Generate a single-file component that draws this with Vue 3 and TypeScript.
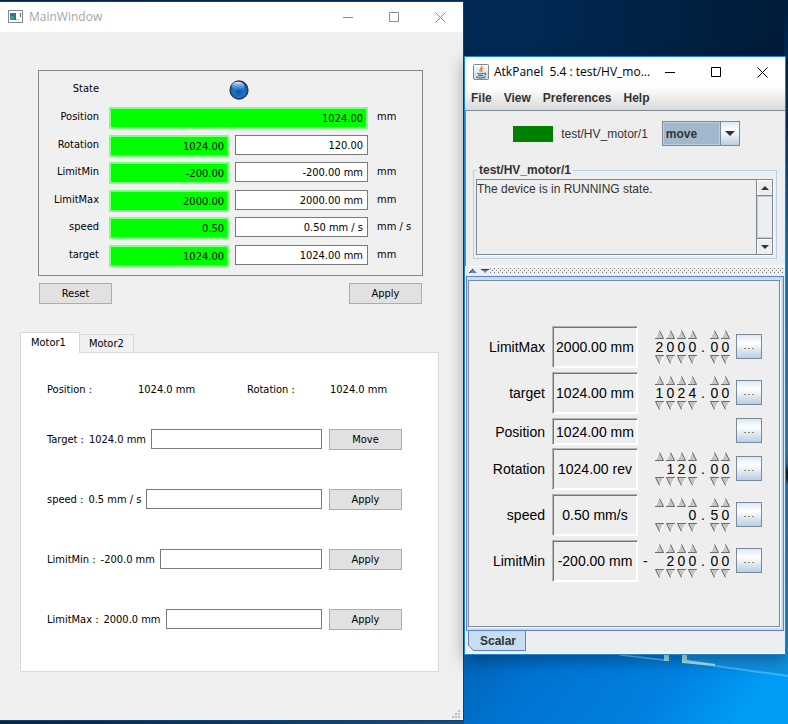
<script setup lang="ts">
import { ref } from 'vue'

interface FieldRow {
  id: string
  label: string
  read: string
  write?: string
  unit?: string
}

interface MotorRow {
  id: string
  label: string
  value: string
  action: string
}

interface ScalarRow {
  label: string
  value: string
  sign: string
  whole: string[]
  decimals: string[]
}

const fields = ref<FieldRow[]>([
  { id: 'position', label: 'Position', read: '1024.00', unit: 'mm' },
  { id: 'rotation', label: 'Rotation', read: '1024.00', write: '120.00' },
  { id: 'limit-min', label: 'LimitMin', read: '-200.00', write: '-200.00 mm', unit: 'mm' },
  { id: 'limit-max', label: 'LimitMax', read: '2000.00', write: '2000.00 mm', unit: 'mm' },
  { id: 'speed', label: 'speed', read: '0.50', write: '0.50 mm / s', unit: 'mm / s' },
  { id: 'target', label: 'target', read: '1024.00', write: '1024.00 mm', unit: 'mm' },
])

const motorRows: MotorRow[] = [
  { id: 'm-target', label: 'Target :', value: '1024.0 mm', action: 'Move' },
  { id: 'm-speed', label: 'speed :', value: '0.5 mm / s', action: 'Apply' },
  { id: 'm-min', label: 'LimitMin :', value: '-200.0 mm', action: 'Apply' },
  { id: 'm-max', label: 'LimitMax :', value: '2000.0 mm', action: 'Apply' },
]

const scalars: ScalarRow[] = [
  { label: 'LimitMax', value: '2000.00 mm', sign: '', whole: ['2', '0', '0', '0'], decimals: ['0', '0'] },
  { label: 'target', value: '1024.00 mm', sign: '', whole: ['1', '0', '2', '4'], decimals: ['0', '0'] },
  { label: 'Position', value: '1024.00 mm', sign: '', whole: [], decimals: [] },
  { label: 'Rotation', value: '1024.00 rev', sign: '', whole: ['', '1', '2', '0'], decimals: ['0', '0'] },
  { label: 'speed', value: '0.50 mm/s', sign: '', whole: ['', '', '', '0'], decimals: ['5', '0'] },
  { label: 'LimitMin', value: '-200.00 mm', sign: '-', whole: ['', '2', '0', '0'], decimals: ['0', '0'] },
]

const menus = ['File', 'View', 'Preferences', 'Help']
const activeTab = ref('Motor1')
const status = 'The device is in RUNNING state.'
</script>

<template>
  <div class="desktop">
    <svg class="wallpaper" viewBox="0 0 788 724" preserveAspectRatio="none" aria-hidden="true">
      <defs>
        <linearGradient id="sky" x1="0" y1="0" x2="1" y2="0">
          <stop offset="0" stop-color="#00234a" />
          <stop offset="0.65" stop-color="#002a55" />
          <stop offset="1" stop-color="#001b38" />
        </linearGradient>
        <linearGradient id="edge" x1="0" y1="0" x2="0" y2="1">
          <stop offset="0" stop-color="#001b38" />
          <stop offset="0.18" stop-color="#003a78" />
          <stop offset="0.36" stop-color="#0a86dc" />
          <stop offset="0.62" stop-color="#1c8fd0" />
          <stop offset="0.64" stop-color="#1b7fc4" />
          <stop offset="0.65" stop-color="#002a5c" />
          <stop offset="0.66" stop-color="#002a5c" />
          <stop offset="0.67" stop-color="#1686cf" />
          <stop offset="1" stop-color="#0a96ee" />
        </linearGradient>
        <linearGradient id="floor" x1="0" y1="0" x2="1" y2="0.2">
          <stop offset="0" stop-color="#0062b4" />
          <stop offset="0.3" stop-color="#0074d2" />
          <stop offset="0.7" stop-color="#0080e0" />
          <stop offset="1" stop-color="#009cf6" />
        </linearGradient>
        <linearGradient id="strip" x1="0" y1="0" x2="1" y2="0">
          <stop offset="0" stop-color="#00264f" />
          <stop offset="0.6" stop-color="#003f78" />
          <stop offset="1" stop-color="#00559c" />
        </linearGradient>
      </defs>
      <rect width="788" height="724" fill="url(#sky)" />
      <rect x="784" width="4" height="724" fill="url(#edge)" />
      <rect x="463" y="640" width="325" height="84" fill="url(#floor)" />
      <rect y="718" width="464" height="6" fill="url(#strip)" />
      <path d="M620 655L664 660" stroke="#5cc0ea" stroke-width="1.5" />
      <path d="M664 652H669V661L664 661Z" fill="#a9e6ee" />
      <path d="M683 652L788 652L788 674L683 661Z" fill="#0f92e2" />
      <path d="M688 662L788 676" stroke="#3db4f0" stroke-width="2" />
      <path d="M682 652H687V660L715 664V666L682 663Z" fill="#a9e6ee" />
    </svg>

    <main class="window main-window">
      <header class="titlebar inactive">
        <svg class="app-icon" viewBox="0 0 16 14" aria-hidden="true">
          <rect x="0.5" y="0.5" width="14" height="12" fill="#fff" stroke="#84878f" />
          <rect x="0" y="12" width="15" height="1" fill="#84878f" />
          <rect x="2" y="3" width="6" height="7" fill="#2f6f9a" />
          <rect x="2" y="6" width="4" height="4" fill="#3f9a78" />
          <rect x="8" y="9" width="3" height="1" fill="#c6c9ce" />
          <rect x="12" y="3" width="1" height="4" fill="#3e6e9e" />
        </svg>
        <h1 class="title">MainWindow</h1>
        <div class="controls">
          <button type="button" aria-label="Minimize"><svg viewBox="0 0 11 11"><path d="M0 5.5H10" /></svg></button>
          <button type="button" aria-label="Maximize"><svg viewBox="0 0 11 11"><path d="M0.5 0.5H9.5V9.5H0.5Z" /></svg></button>
          <button type="button" aria-label="Close"><svg viewBox="0 0 11 11"><path d="M0.5 0.5L10.5 10.5M10.5 0.5L0.5 10.5" /></svg></button>
        </div>
      </header>

      <div class="main-body">
        <section class="device">
          <div class="frame">
            <span class="name">State</span>
            <span class="led-cell">
              <svg class="led" viewBox="0 0 20 20" aria-hidden="true">
                <defs>
                  <radialGradient id="led-fill" cx="0.5" cy="0.6" r="0.55">
                    <stop offset="0" stop-color="#0f52a4" />
                    <stop offset="0.55" stop-color="#1c74cd" />
                    <stop offset="1" stop-color="#1a4c8a" />
                  </radialGradient>
                  <linearGradient id="led-shine" x1="0" y1="0" x2="0" y2="1">
                    <stop offset="0" stop-color="#e4f3ff" />
                    <stop offset="1" stop-color="#3c9cf0" stop-opacity="0.1" />
                  </linearGradient>
                </defs>
                <circle cx="10" cy="10" r="9" fill="url(#led-fill)" stroke="#28364a" stroke-width="1.3" />
                <ellipse cx="9" cy="6.2" rx="6.4" ry="4.4" fill="url(#led-shine)" />
              </svg>
            </span>
            <span></span>
            <template v-for="f in fields" :key="f.id">
              <label class="name" :for="f.id">{{ f.label }}</label>
              <input :id="f.id" class="read" :class="{ wide: !f.write }" :value="f.read" readonly />
              <input v-if="f.write" v-model="f.write" class="write" :aria-label="f.label + ' set value'" />
              <span class="unit">{{ f.unit }}</span>
            </template>
          </div>
          <div class="actions">
            <button type="button" class="push">Reset</button>
            <button type="button" class="push">Apply</button>
          </div>
        </section>

        <section class="motors">
          <div class="tabs" role="tablist">
            <button
              v-for="t in ['Motor1', 'Motor2']"
              :key="t"
              type="button"
              role="tab"
              class="tab"
              :class="{ active: t === activeTab }"
              :aria-selected="t === activeTab"
              @click="activeTab = t"
            >{{ t }}</button>
          </div>
          <div class="pane">
            <div class="summary">
              <span>Position :</span><span>1024.0 mm</span><span>Rotation :</span><span>1024.0 mm</span>
            </div>
            <div v-for="m in motorRows" :key="m.id" class="motor-row">
              <label :for="m.id"><span>{{ m.label }}</span><span>{{ m.value }}</span></label>
              <input :id="m.id" type="text" />
              <button type="button" class="push">{{ m.action }}</button>
            </div>
          </div>
        </section>
      </div>
      <svg class="grip" viewBox="0 0 8 8" aria-hidden="true">
        <path d="M6 0h2v2H6zM3 3h2v2H3zM6 3h2v2H6zM0 6h2v2H0zM3 6h2v2H3zM6 6h2v2H6z" fill="#bcbcbc" />
      </svg>
    </main>

    <aside class="window atk">
      <header class="titlebar">
        <svg class="java" viewBox="0 0 16 16" aria-hidden="true">
          <defs>
            <linearGradient id="java-bg" x1="0" y1="0" x2="0" y2="1">
              <stop offset="0" stop-color="#fdfdfd" />
              <stop offset="1" stop-color="#c3d3e2" />
            </linearGradient>
          </defs>
          <rect x="0.5" y="0.5" width="15" height="15" rx="1" fill="url(#java-bg)" stroke="#7d8791" />
          <path d="M8.6 1.6C10 3.6 5.6 4.6 7.4 7.8M10.6 4C8 5 8.2 6 9.2 8" fill="none" stroke="#e8803a" stroke-width="1.3" />
          <path d="M4.3 9.2C6 9.9 9 9.9 10.8 9.2M5 11.2C7 11.8 9 11.8 10.2 11.2M3.2 13.1C6 14.1 10.4 14 12.4 12.8M11.2 9.2C13.6 8.6 13.2 10.6 11.4 11" fill="none" stroke="#446a92" stroke-width="1.1" />
        </svg>
        <h2 class="title">AtkPanel&nbsp; 5.4&nbsp;: test/HV_mo...</h2>
        <div class="controls">
          <button type="button" aria-label="Minimize"><svg viewBox="0 0 11 11"><path d="M0 5.5H10" /></svg></button>
          <button type="button" aria-label="Maximize"><svg viewBox="0 0 11 11"><path d="M0.5 0.5H9.5V9.5H0.5Z" /></svg></button>
          <button type="button" aria-label="Close"><svg viewBox="0 0 11 11"><path d="M0.5 0.5L10.5 10.5M10.5 0.5L0.5 10.5" /></svg></button>
        </div>
      </header>
      <nav class="menubar">
        <button v-for="m in menus" :key="m" type="button">{{ m }}</button>
      </nav>

      <section class="upper">
        <div class="command">
          <span class="state-box"></span>
          <label for="command">test/HV_motor/1</label>
          <span class="combo">
            <select id="command"><option>move</option></select>
            <span class="combo-arrow"><svg viewBox="0 0 10 5"><path d="M0 0H10L5 5Z" fill="#333" /></svg></span>
          </span>
        </div>

        <fieldset class="status">
          <legend>test/HV_motor/1</legend>
          <div class="scroller">
            <textarea readonly aria-label="Device status" :value="status"></textarea>
            <div class="scrollbar">
              <button type="button" aria-label="Scroll up"><svg viewBox="0 0 8 4"><path d="M4 0L8 4H0Z" /></svg></button>
              <span class="thumb"></span>
              <button type="button" aria-label="Scroll down"><svg viewBox="0 0 8 4"><path d="M0 0H8L4 4Z" /></svg></button>
            </div>
          </div>
        </fieldset>
      </section>

      <div class="divider">
        <svg class="arrows" viewBox="0 0 20 4" aria-hidden="true">
          <path d="M4 0L8 4H0Z" fill="#6382bf" /><path d="M12 0H20L16 4Z" fill="#6382bf" />
          <path d="M4 0L0 4M12 0.5H20" stroke="#333" stroke-width="1" />
        </svg>
        <svg class="dots" aria-hidden="true">
          <defs>
            <pattern id="dot-grid" width="4" height="4" patternUnits="userSpaceOnUse">
              <rect width="1" height="1" fill="#7a7f86" /><rect x="2" y="2" width="1" height="1" fill="#7a7f86" />
            </pattern>
          </defs>
          <rect width="100%" height="100%" fill="url(#dot-grid)" />
        </svg>
      </div>

      <div class="scalar-pane">
        <div class="scalar-inner">
          <div v-for="s in scalars" :key="s.label" class="scalar" :class="{ compact: !s.whole.length }">
            <span class="s-name">{{ s.label }}</span>
            <output class="s-value">{{ s.value }}</output>
            <div class="wheel">
              <template v-if="s.whole.length">
                <span class="sign">{{ s.sign }}</span>
                <template v-for="part in ['whole', 'decimals'] as const" :key="part">
                  <span v-if="part === 'decimals'" class="dot">.</span>
                  <span v-for="(d, i) in s[part]" :key="part + i" class="digit">
                    <button type="button" aria-label="Increase">
                      <svg viewBox="0 0 9 9"><path d="M4.5 0L9 8.5H0Z" fill="#c6c6c6" /><path d="M4 0.5L0.5 8" stroke="#fff" /><path d="M4.5 0.5L8.5 8.5H0" fill="none" stroke="#6c6c6c" /></svg>
                    </button>
                    <span>{{ d }}</span>
                    <button type="button" aria-label="Decrease">
                      <svg viewBox="0 0 9 9"><path d="M0 0.5H9L4.5 9Z" fill="#c6c6c6" /><path d="M5 8.5L8.5 1" stroke="#fff" /><path d="M9 0.5H0.5L4.5 8.5" fill="none" stroke="#6c6c6c" /></svg>
                    </button>
                  </span>
                </template>
              </template>
            </div>
            <button type="button" class="more" :aria-label="s.label + ' options'">
              <svg viewBox="0 0 10 1"><path d="M0 0.5H2M4 0.5H6M8 0.5H10" stroke="#a5834f" /></svg>
            </button>
          </div>
        </div>
      </div>
      <div class="bottom-tabs" role="tablist">
        <button type="button" role="tab" aria-selected="true">
          <svg viewBox="0 0 6 6" aria-hidden="true"><path d="M0 0L6 6H0Z" fill="#eee" /><path d="M0 0L6 6" stroke="#6382bf" /></svg>
          Scalar
        </button>
      </div>
    </aside>
  </div>
</template>

<style>
body {
  margin: 0;
}
</style>

<style scoped>
* {
  box-sizing: border-box;
}

button,
input,
select,
textarea {
  margin: 0;
  padding: 0;
  border: 0;
  border-radius: 0;
  outline: 0;
  background: none;
  color: inherit;
  font: inherit;
}

svg {
  display: block;
}

.desktop {
  position: relative;
  display: grid;
  grid-template-columns: minmax(0, 464fr) minmax(0, 324fr);
  min-height: 100vh;
  overflow: hidden;
  background: #00234a;
}

.wallpaper {
  position: absolute;
  inset: 0;
  width: 100%;
  height: 100%;
}

.window {
  position: relative;
  display: flex;
  flex-direction: column;
}

.titlebar {
  display: flex;
  align-items: center;
  height: 30px;
  padding-left: 8px;
  background: #fff;
  color: #000;
  font-family: 'Open Sans', 'Noto Sans', sans-serif;
  font-size: 12px;
}

.titlebar.inactive {
  color: #a5a5a5;
}

.title {
  flex: 1;
  min-width: 0;
  margin: 0;
  font-size: 12px;
  font-weight: 400;
  line-height: 18px;
  white-space: nowrap;
}

.controls {
  display: flex;
}

.controls button {
  display: flex;
  align-items: center;
  justify-content: center;
  width: 46px;
  height: 28px;
}

.controls svg {
  width: 11px;
  height: 11px;
  fill: none;
  stroke: currentColor;
}

.inactive .controls {
  color: #8a8a8a;
}

/* Motor window */
.main-window {
  margin: 1px 0 3px;
  border: solid #1d3f63;
  border-width: 1px 1px 1px 0;
  background: #f0f0f0;
  color: #000;
  font-family: 'DejaVu Sans Condensed', 'DejaVu Sans', sans-serif;
  font-size: 11px;
  line-height: 20px;
}

.app-icon {
  width: 16px;
  height: 14px;
  margin-right: 5px;
}

.main-body {
  flex: 1;
  padding: 38px 24px 0 20px;
}

.device {
  padding: 0 16px 0 18px;
}

.frame {
  display: grid;
  grid-template-columns: 64px minmax(0, 120fr) minmax(0, 133fr) 48px;
  grid-template-rows: 28px 28px 27px 28px 27px 28px 30px;
  column-gap: 6px;
  align-items: start;
  padding-top: 8px;
  border: 1px solid #828790;
}

.name {
  padding-right: 4px;
  text-align: right;
}

.led-cell {
  grid-column: span 2;
  justify-self: center;
  padding-top: 1px;
}

.led {
  width: 20px;
  height: 20px;
}

.read {
  width: 100%;
  height: 22px;
  padding-right: 3px;
  border: 2px solid #80ff80;
  background: #0f0;
  text-align: right;
}

.read.wide {
  grid-column: span 2;
}

.write {
  width: 100%;
  height: 20px;
  padding: 1px 4px 0 0;
  border: 1px solid #7a7a7a;
  background: #fff;
  text-align: right;
}

.unit {
  padding-left: 3px;
  white-space: nowrap;
}

.actions {
  display: flex;
  justify-content: space-between;
  padding: 7px 1px 0;
}

.push {
  width: 73px;
  height: 21px;
  padding-top: 1px;
  border: 1px solid #adadad;
  background: #e1e1e1;
  line-height: 18px;
}

.motors {
  padding-top: 28px;
}

.tabs {
  display: flex;
  align-items: flex-end;
}

.tab {
  height: 18px;
  padding: 0 9px;
  border: 1px solid #d9d9d9;
  border-width: 1px 1px 0 0;
  background: #f0f0f0;
  line-height: 18px;
}

.tab.active {
  z-index: 1;
  height: 21px;
  margin-bottom: -1px;
  padding: 0 13px 0 10px;
  border-left-width: 1px;
  background: #fff;
}

.pane {
  display: flex;
  flex-direction: column;
  gap: 39px;
  padding: 27px 36px 41px 26px;
  border: 1px solid #d9d9d9;
  background: #fff;
}

.summary {
  display: grid;
  grid-template-columns: 91fr 109fr 83fr 72fr;
  margin-bottom: -11px;
}

.summary,
.motor-row {
  height: 21px;
  white-space: nowrap;
}

.motor-row {
  display: flex;
  align-items: center;
  gap: 5px;
}

.motor-row label {
  display: flex;
  gap: 5px;
}

.motor-row .push {
  margin-left: 2px;
}

.motor-row input {
  flex: 1;
  align-self: flex-start;
  min-width: 0;
  height: 20px;
  border: 1px solid #7a7a7a;
  background: #fff;
}

.grip {
  align-self: flex-end;
  width: 8px;
  height: 8px;
  margin: 0 3px 2px 0;
}

/* Device panel window */
.atk {
  align-self: start;
  margin: 56px 2px 0 0;
  border: 1px solid #1883d7;
  background: #eee;
  box-shadow: 0 5px 16px rgba(0, 0, 0, 0.35);
  color: #333;
  font-family: 'Liberation Sans', Arial, sans-serif;
  font-size: 12px;
  line-height: 16px;
}

.java {
  width: 16px;
  height: 16px;
  margin-right: 5px;
}

.menubar {
  display: flex;
  gap: 12px;
  height: 24px;
  padding-left: 6px;
  border-bottom: 1px solid #7a8a99;
  background: linear-gradient(#fff, #dadada);
}

.menubar button {
  height: 21px;
  font-weight: 700;
}

.upper {
  border-left: 1px solid #7a8a99;
}

.command {
  display: flex;
  align-items: center;
  justify-content: center;
  padding: 10px 0 0 2px;
}

.state-box {
  width: 40px;
  height: 16px;
  margin-right: 8px;
  background: #008000;
}

.command label {
  margin-right: 14px;
}

.combo {
  display: flex;
  width: 78px;
  height: 25px;
  border: 1px solid #7a8a99;
}

.combo select {
  flex: 1;
  min-width: 0;
  padding-left: 2px;
  border: 1px solid #b8cfe5;
  appearance: none;
  background: #a3b8cc;
  font-weight: 700;
}

.combo-arrow {
  display: flex;
  align-items: center;
  justify-content: center;
  width: 19px;
  border-left: 1px solid #7a8a99;
  background: linear-gradient(#dde8f3, #fff 35%, #b8cfe5);
}

.combo-arrow svg {
  width: 10px;
  height: 5px;
}

.status {
  min-width: 0;
  margin: 16px 8px 7px 7px;
  padding: 1px 3px 3px 2px;
  border: 1px solid #b8cfe5;
}

.status legend {
  margin-left: 1px;
  padding: 0 2px;
  font-weight: 700;
}

.scroller {
  display: flex;
  height: 76px;
  border: 1px solid #7a8a99;
  box-shadow: 1px 1px #fff;
}

.scroller textarea {
  flex: 1;
  min-width: 0;
  resize: none;
  overflow: hidden;
  line-height: 18px;
}

.scrollbar {
  display: flex;
  flex-direction: column;
  width: 16px;
  border-left: 1px solid #7a8a99;
}

.scrollbar button {
  display: flex;
  align-items: center;
  justify-content: center;
  height: 16px;
  border: solid #7a8a99;
  border-width: 0 0 1px;
  box-shadow: inset 1px 1px #fff;
}

.scrollbar button:last-child {
  border-width: 1px 0 0;
}

.scrollbar svg {
  width: 8px;
  height: 4px;
  fill: #333;
}

.thumb {
  flex: 1;
  border: 1px solid #b8cfe5;
  border-right: 0;
}

.divider {
  display: flex;
  align-items: center;
  gap: 1px;
  height: 10px;
  padding: 0 2px 2px 4px;
  border-top: 1px solid #fff;
}

.arrows {
  width: 20px;
  height: 4px;
}

.dots {
  flex: 1;
  min-width: 0;
  height: 5px;
}

.scalar-pane {
  padding: 3px 3px 3px 1px;
  margin: 0 1px;
  border: 1px solid #6382bf;
  background: #c8ddf2;
}

.scalar-inner {
  display: flex;
  flex-direction: column;
  align-items: center;
  gap: 4px;
  padding: 45px 0 44px 1px;
  border: 1px solid #7a8a99;
  background: #eee;
  box-shadow: 1px 1px #fff;
  color: #000;
  font-size: 14px;
}

.scalar {
  display: grid;
  grid-template-columns: 60px 86px 88px 26px;
  column-gap: 5px;
  align-items: center;
  height: 42px;
}

.scalar.compact {
  height: 26px;
}

.s-name {
  padding-right: 2px;
  text-align: right;
}

.s-value {
  display: flex;
  align-items: center;
  justify-content: center;
  height: 100%;
  border: 1px solid;
  border-color: #b4b4b4 #fff #fff #b4b4b4;
  box-shadow: inset 1px 1px #747474, inset -1px -1px #fff;
  white-space: nowrap;
}

.wheel {
  display: flex;
  align-items: center;
}

.sign {
  flex: none;
  width: 11px;
}

.dot {
  flex: none;
  width: 11px;
  padding-left: 3px;
}

.digit {
  display: flex;
  flex: none;
  flex-direction: column;
  align-items: center;
  width: 11px;
}

.digit span {
  height: 16px;
}

.digit button,
.digit svg {
  width: 9px;
  height: 9px;
}

.more {
  display: flex;
  align-items: center;
  justify-content: center;
  width: 26px;
  height: 25px;
  margin-bottom: 2px;
  padding-top: 4px;
  border: 1px solid #7a8a99;
  background: linear-gradient(#dde8f3, #fff 35%, #b8cfe5);
}

.more svg {
  width: 10px;
  height: 1px;
}

.bottom-tabs {
  display: flex;
  height: 23px;
  padding-left: 3px;
  border-bottom: 1px solid #fff;
}

.bottom-tabs button {
  position: relative;
  height: 20px;
  padding: 0 9px 0 11px;
  border: solid #6382bf;
  border-width: 0 1px 1px;
  background: #c8ddf2;
  font-weight: 700;
}

.bottom-tabs svg {
  position: absolute;
  bottom: -1px;
  left: -1px;
  width: 6px;
  height: 6px;
}
</style>
